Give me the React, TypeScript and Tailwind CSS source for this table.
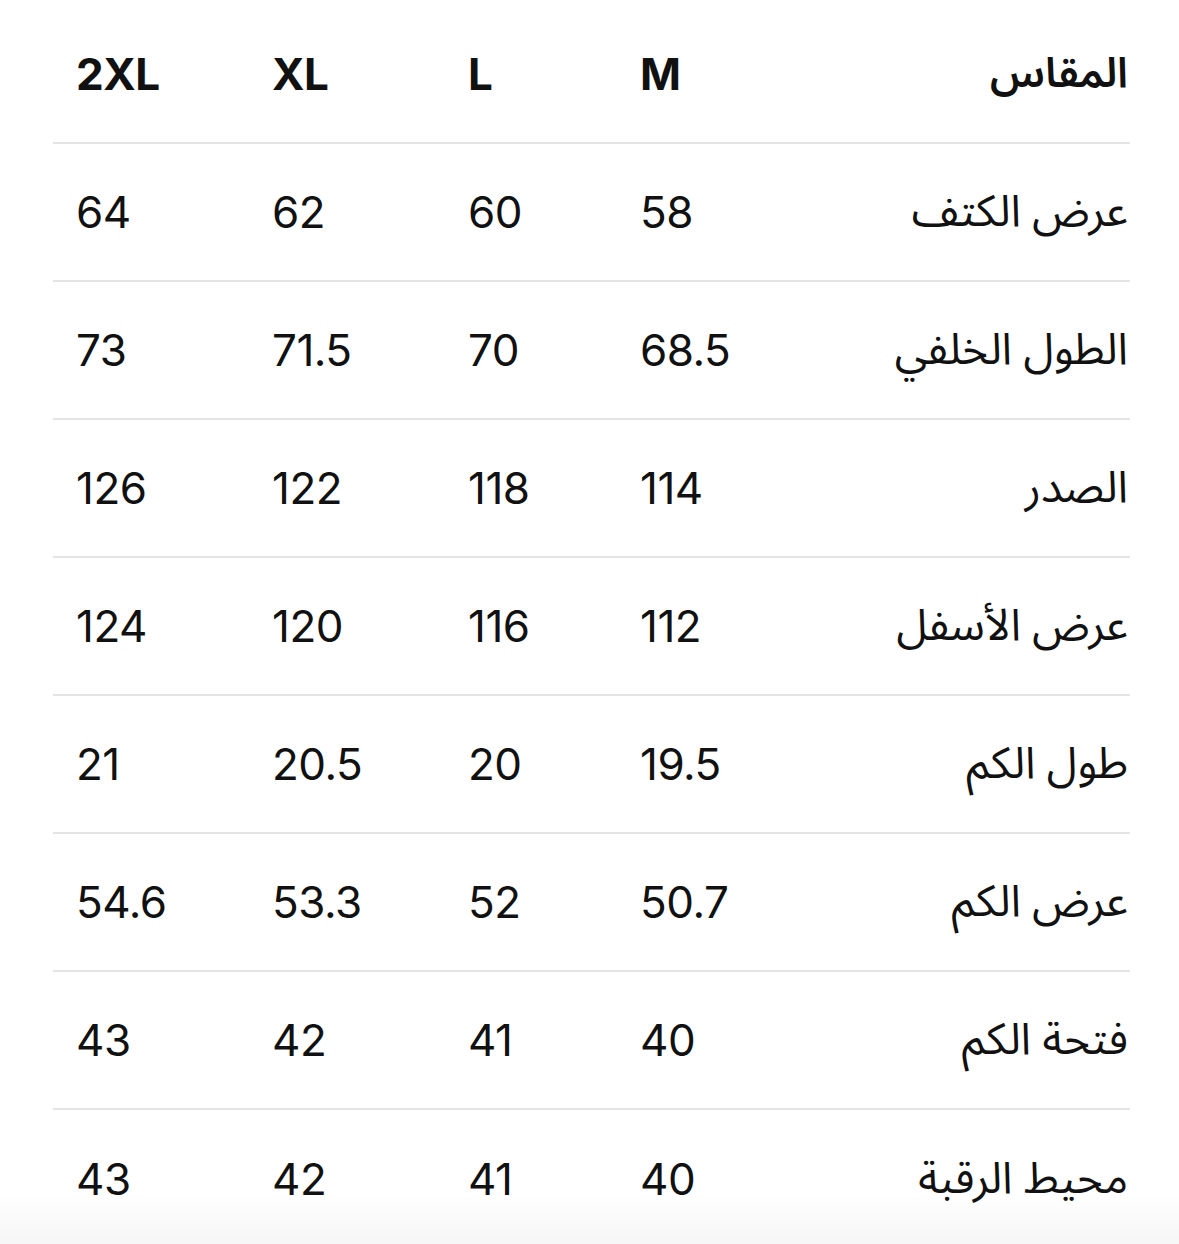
const header = { label: "المقاس", values: ["M", "L", "XL", "2XL"] };

const rows = [
  { label: "عرض الكتف", values: ["58", "60", "62", "64"] },
  { label: "الطول الخلفي", values: ["68.5", "70", "71.5", "73"] },
  { label: "الصدر", values: ["114", "118", "122", "126"] },
  { label: "عرض الأسفل", values: ["112", "116", "120", "124"] },
  { label: "طول الكم", values: ["19.5", "20", "20.5", "21"] },
  { label: "عرض الكم", values: ["50.7", "52", "53.3", "54.6"] },
  { label: "فتحة الكم", values: ["40", "41", "42", "43"] },
  { label: "محيط الرقبة", values: ["40", "41", "42", "43"] },
];

const latin = "font-['Inter','Liberation_Sans',sans-serif]";
const arabic = "font-['Noto_Sans_Arabic','DejaVu_Sans',sans-serif]";

function Row({
  label,
  values,
  head = false,
  last = false,
}: {
  label: string;
  values: string[];
  head?: boolean;
  last?: boolean;
}) {
  return (
    <div
      dir="rtl"
      className={`grid h-[138px] grid-cols-[260px_228px_172px_196px_196px] items-center pl-[23px] pr-[2px] ${
        last ? "" : "border-b-2 border-[#e4e4e4]"
      }`}
    >
      <div
        className={`${arabic} text-right leading-none text-[#111] ${
          head ? "text-[42px] font-semibold" : "text-[44px] font-normal"
        }`}
      >
        {label}
      </div>
      {values.map((v, i) => (
        <div
          key={i}
          dir="ltr"
          className={`${latin} text-left text-[44px] leading-none tracking-[-0.5px] text-[#111] ${
            head ? "font-bold" : "font-normal"
          }`}
        >
          {v}
        </div>
      ))}
    </div>
  );
}

export default function App() {
  return (
    <div className="h-[1244px] w-full overflow-hidden bg-[linear-gradient(to_bottom,#ffffff_96%,#f6f6f6)] pt-[6px]">
      <div className="ml-[53px] w-[1077px]">
        <Row label={header.label} values={header.values} head />
        {rows.map((r, i) => (
          <Row key={r.label} label={r.label} values={r.values} last={i === rows.length - 1} />
        ))}
      </div>
    </div>
  );
}
